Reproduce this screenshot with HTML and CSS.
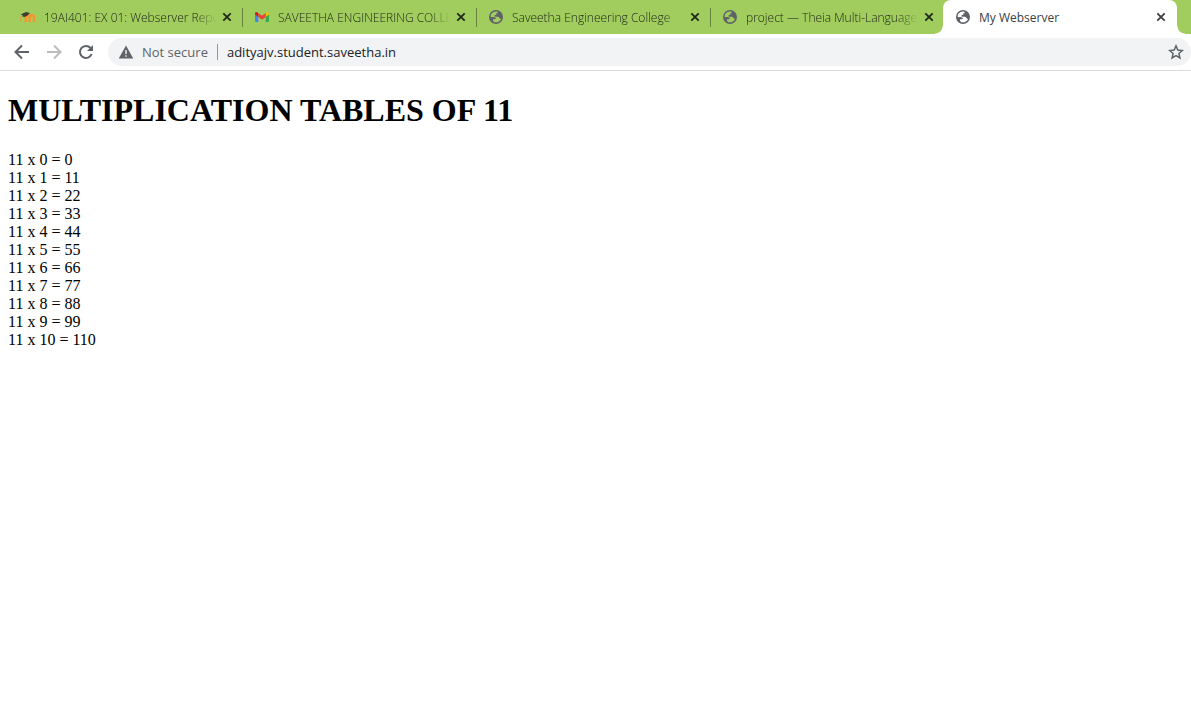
FILE: index.html
```html
<!DOCTYPE html>
<html lang="en">
<head>
<meta charset="utf-8">
<title>My Webserver</title>
<link rel="stylesheet" href="styles.css">
</head>
<body>
<svg class="defs" aria-hidden="true">
  <symbol id="globe" viewBox="0 0 16 16">
    <circle cx="8" cy="8" r="7" fill="#5f6368"/>
    <path class="land" d="M9.2 2.500C6.800 2.100 4.200 3.300 3.100 5.300L2.500 7.500C4.200 8.800 5.900 8 7.200 8.500C8.500 9.100 7.700 10.300 6.600 10.300H5V12L6.500 13.300C9.500 13.700 12 12.400 13.100 9.900C11.500 9.900 11.500 8 9.900 7.700H6.600V6H8.200V4.300H9.900Z"/>
  </symbol>
  <symbol id="cross" viewBox="0 0 10 10">
    <path d="M1.300 1.300L8.700 8.700M8.700 1.300L1.300 8.700" fill="none" stroke="currentColor" stroke-width="1.800"/>
  </symbol>
</svg>
<header class="browser">
  <nav class="tabs" aria-label="Open tabs">
    <div class="tab">
      <svg class="favicon" viewBox="0 0 16 16" aria-hidden="true">
        <path d="M5.700 13V8.500C5.700 5.500 9.700 5.500 9.700 8.500V13M9.700 8.500C9.700 5.500 14 5.500 14 8.500V13" fill="none" stroke="#f7932c" stroke-width="2.400"/>
        <path d="M.800 7V12" stroke="#e49632" stroke-width=".800"/>
        <path d="M.500 5.600L6 3L10 4L7.500 6.600L4.500 8L2.500 7.500V6Z" fill="#3c3d36"/>
      </svg>
      <button class="tab-title" type="button">19AI401: EX 01: Webserver Repo</button>
      <button class="close" type="button" aria-label="Close tab"><svg><use href="#cross"/></svg></button>
    </div>
    <div class="tab">
      <svg class="favicon" viewBox="0 0 16 16" aria-hidden="true">
        <path d="M1 5L4.300 7.500V13H2Q1 13 1 12Z" fill="#4285f4"/>
        <path d="M15 5L11.700 7.500V13H14Q15 13 15 12Z" fill="#34a853"/>
        <path d="M11.700 4L13 3.200Q15 2.800 15 5V5.500L11.700 8Z" fill="#fbbc04"/>
        <path d="M1 5.500V4.500Q1 2.800 3 3.200L4.300 4V8Z" fill="#c5221f"/>
        <path d="M4.300 4L8 6.800L11.700 4V8L8 10.800L4.300 8Z" fill="#ea4335"/>
      </svg>
      <button class="tab-title" type="button">SAVEETHA ENGINEERING COLLE</button>
      <button class="close" type="button" aria-label="Close tab"><svg><use href="#cross"/></svg></button>
    </div>
    <div class="tab">
      <svg class="favicon" aria-hidden="true"><use href="#globe"/></svg>
      <button class="tab-title" type="button">Saveetha Engineering College</button>
      <button class="close" type="button" aria-label="Close tab"><svg><use href="#cross"/></svg></button>
    </div>
    <div class="tab">
      <svg class="favicon" aria-hidden="true"><use href="#globe"/></svg>
      <button class="tab-title" type="button">project — Theia Multi-Language</button>
      <button class="close" type="button" aria-label="Close tab"><svg><use href="#cross"/></svg></button>
    </div>
    <div class="tab active">
      <svg class="favicon" aria-hidden="true"><use href="#globe"/></svg>
      <button class="tab-title" type="button" aria-current="page">My Webserver</button>
      <button class="close" type="button" aria-label="Close tab"><svg><use href="#cross"/></svg></button>
    </div>
  </nav>
  <div class="toolbar">
    <button class="tool" type="button" aria-label="Back"><svg viewBox="0 0 16 16"><path d="M15 8H2M8 1.500L1.500 8L8 14.500" fill="none" stroke="#5f6368" stroke-width="2"/></svg></button>
    <button class="tool" type="button" aria-label="Forward" disabled><svg viewBox="0 0 16 16"><path d="M1 8H14M8 1.500L14.500 8L8 14.500" fill="none" stroke="#babcbe" stroke-width="2"/></svg></button>
    <button class="tool" type="button" aria-label="Reload"><svg viewBox="0 0 16 16"><path d="M13.600 10A6 6 0 1 1 12.500 4" fill="none" stroke="#5f6368" stroke-width="2"/><path d="M15 1V7H9Z" fill="#5f6368"/></svg></button>
    <div class="address">
      <svg class="warning" viewBox="0 0 16 16" aria-hidden="true"><path d="M8 1.500L15.300 14.500H.700Z" fill="#5f6368"/><path d="M7.300 6H8.700V10H7.300ZM7.300 11.300H8.700V12.700H7.300Z" fill="#f1f3f4"/></svg>
      <label class="security" for="url">Not secure</label>
      <input class="url" id="url" type="text" value="adityajv.student.saveetha.in">
      <button class="star" type="button" aria-label="Bookmark this page"><svg viewBox="0 0 16 16"><path d="M8 1.900L9.800 6.100L14.300 6.500L10.900 9.500L11.900 13.900L8 11.600L4.100 13.900L5.100 9.500L1.700 6.500L6.200 6.100Z" fill="none" stroke="#5f6368" stroke-width="1.500"/></svg></button>
    </div>
  </div>
</header>
<main class="page">
  <h1 class="heading">MULTIPLICATION TABLES OF 11</h1>
  <p class="results">
    11 x 0 = 0<br>
    11 x 1 = 11<br>
    11 x 2 = 22<br>
    11 x 3 = 33<br>
    11 x 4 = 44<br>
    11 x 5 = 55<br>
    11 x 6 = 66<br>
    11 x 7 = 77<br>
    11 x 8 = 88<br>
    11 x 9 = 99<br>
    11 x 10 = 110
  </p>
</main>
</body>
</html>
```
FILE: styles.css
```css
* { box-sizing: border-box; }

body {
  margin: 0;
  background: #fff;
  color: #000;
  font-family: "Liberation Serif", "Times New Roman", serif;
}

.defs { position: absolute; width: 0; height: 0; }

button {
  margin: 0;
  padding: 0;
  border: 0;
  background: none;
  color: inherit;
  font: inherit;
}

.browser {
  border-bottom: 1px solid #d9dbdd;
  font-family: "Open Sans", "Noto Sans", sans-serif;
}

.tabs {
  display: flex;
  height: 34px;
  padding-left: 8px;
  background: #a1cd5e;
  overflow: hidden;
}

.tab {
  position: relative;
  display: flex;
  flex: 0 1 234px;
  align-items: center;
  min-width: 0;
  padding: 0 8px 0 12px;
  color: #20281a;
  font-size: 12px;
  font-weight: 300;
}

.tab:not(.active)::after {
  content: "";
  position: absolute;
  top: 8px;
  right: -1px;
  width: 1px;
  height: 19px;
  background: #68813f;
}

.tab:has(+ .active)::after { display: none; }

.favicon {
  flex: none;
  width: 16px;
  height: 16px;
  margin-right: 8px;
  fill: #a1cd5e;
}

.tab-title {
  flex: 1;
  min-width: 0;
  overflow: hidden;
  text-align: left;
  white-space: nowrap;
}

.tab:not(.active) .tab-title {
  mask-image: linear-gradient(to right, #000 calc(100% - 20px), transparent);
}

.close {
  display: flex;
  flex: none;
  align-items: center;
  justify-content: center;
  width: 14px;
  height: 16px;
  margin-left: 4px;
}

.close svg { width: 10px; height: 10px; }

.active {
  margin-left: -1px;
  padding-right: 9px;
  border-radius: 8px 8px 0 0;
  background: #fff;
  color: #3c4043;
  font-weight: 400;
}

.active .favicon { fill: #fff; }

.active::before,
.active::after {
  content: "";
  position: absolute;
  bottom: 0;
  width: 8px;
  height: 8px;
}

.active::before {
  right: 100%;
  background: radial-gradient(circle at 0 0, transparent 7px, #fff 8px);
}

.active::after {
  left: 100%;
  background: radial-gradient(circle at 100% 0, transparent 7px, #fff 8px);
}

.toolbar {
  display: flex;
  align-items: center;
  gap: 16px;
  padding: 4px 0 4px 14px;
}

.tool { display: flex; }
.tool svg { width: 16px; height: 16px; }

.address {
  display: flex;
  flex: 1;
  align-items: center;
  height: 28px;
  margin-left: -2px;
  padding: 0 7px 0 10px;
  border-radius: 14px;
  background: #f1f3f4;
  font-size: 13px;
}

.warning { flex: none; width: 16px; height: 16px; }

.security {
  margin: 0 9px 0 8px;
  padding-right: 9px;
  border-right: 1px solid #95989b;
  color: #5f6368;
  line-height: 16px;
  white-space: nowrap;
}

.url {
  flex: 1;
  min-width: 0;
  padding: 0;
  border: 0;
  outline: 0;
  background: none;
  color: #202124;
  font: inherit;
}

.star { display: flex; }
.star svg { width: 16px; height: 16px; }

.page { padding: 0 8px; }

.heading {
  margin: 21px 0 22px;
  font-size: 32px;
  line-height: 37px;
}

.results {
  margin: 0;
  font-size: 16px;
  line-height: 18px;
}
```
